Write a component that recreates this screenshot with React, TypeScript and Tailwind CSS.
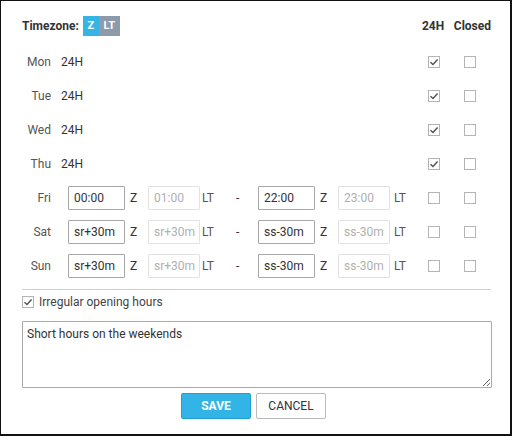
import React, { useState } from "react";

const font = { fontFamily: "Roboto, 'Liberation Sans', sans-serif" };

function Box({ checked }: { checked: boolean }) {
  return (
    <span className="flex h-[12px] w-[12px] items-center justify-center border border-[#b4b4b4] bg-white">
      {checked && (
        <svg width="10" height="10" viewBox="0 0 10 10">
          <path d="M1.5 5.2 L4 7.5 L8.6 2.4" fill="none" stroke="#555" strokeWidth="1.5" />
        </svg>
      )}
    </span>
  );
}

function TimeInput({ value, disabled, w }: { value: string; disabled?: boolean; w: string }) {
  return (
    <div
      className={
        "flex h-[24px] items-center rounded-[1px] border pl-[5px] " +
        w +
        (disabled ? " border-[#e2e2e2] text-[#b0b0b0]" : " border-[#a8a8a8] text-[#333]")
      }
    >
      {value}
    </div>
  );
}

const days = [
  { d: "Mon", full: true },
  { d: "Tue", full: true },
  { d: "Wed", full: true },
  { d: "Thu", full: true },
  { d: "Fri", full: false, a: "00:00", b: "01:00", c: "22:00", e: "23:00" },
  { d: "Sat", full: false, a: "sr+30m", b: "sr+30m", c: "ss-30m", e: "ss-30m" },
  { d: "Sun", full: false, a: "sr+30m", b: "sr+30m", c: "ss-30m", e: "ss-30m" },
];

export default function App() {
  const [note, setNote] = useState("Short hours on the weekends");

  return (
    <div
      style={font}
      className="box-border h-[436px] w-[512px] border-t border-l border-r-2 border-b-2 border-[#111] bg-white text-[12px] text-[#333]"
    >
      <div className="pl-[21px] pr-[19px] pt-[15px]">
        {/* header */}
        <div className="flex h-[20px] items-center">
          <span className="font-bold text-[#333]">Timezone:</span>
          <span className="ml-[4px] flex h-[20px] w-[16px] items-center justify-center bg-[#35b5e5] text-[11px] font-bold text-white">
            Z
          </span>
          <span className="flex h-[20px] w-[21px] items-center justify-center bg-[#8d9aab] text-[11px] font-bold text-white">
            LT
          </span>
          <div className="ml-auto flex">
            <span className="w-[36px] text-center font-bold">24H</span>
            <span className="w-[40px] pl-[2px] text-right font-bold">Closed</span>
          </div>
        </div>

        <div className="mt-[9px]">
          {days.map((r) => (
            <div key={r.d} className="flex h-[34px] items-center">
              <span className="w-[29px] text-right text-[#555]">{r.d}</span>
              {r.full ? (
                <span className="ml-[10px]">24H</span>
              ) : (
                <div className="ml-[17px] flex items-center">
                  <TimeInput value={r.a!} w="w-[57px]" />
                  <span className="w-[23px] pl-[5px]">Z</span>
                  <TimeInput value={r.b!} w="w-[52px]" disabled />
                  <span className="w-[36px] pl-[2px] text-[#555]">LT</span>
                  <span className="w-[22px]">-</span>
                  <TimeInput value={r.c!} w="w-[57px]" />
                  <span className="w-[23px] pl-[5px]">Z</span>
                  <TimeInput value={r.e!} w="w-[52px]" disabled />
                  <span className="pl-[4px] text-[#555]">LT</span>
                </div>
              )}
              <div className="ml-auto mr-[3px] flex">
                <div className="flex w-[36px] justify-center">
                  <Box checked={r.full} />
                </div>
                <div className="flex w-[36px] justify-center">
                  <Box checked={false} />
                </div>
              </div>
            </div>
          ))}
        </div>

        <div className="mt-[6px] h-px bg-[#cfcfcf]" />

        <div className="flex h-[24px] items-center gap-[5px]">
          <Box checked={true} />
          <span className="text-[#444]">Irregular opening hours</span>
        </div>

        <textarea
          value={note}
          onChange={(e) => setNote(e.target.value)}
          className="mt-[7px] block h-[67px] w-[470px] rounded-[1px] border border-[#aaa] px-[4px] py-[3px] text-[12px] text-[#333] outline-none"
          style={font}
        />

        <div className="mt-[5px] flex justify-center gap-[5px] pr-[6px]">
          <button className="h-[26px] w-[70px] rounded-[2px] border border-[#1f9fd2] bg-[#33b4e6] text-[12px] font-bold text-white">
            SAVE
          </button>
          <button className="h-[26px] w-[70px] rounded-[2px] border border-[#bbb] bg-white text-[12px] text-[#333]">
            CANCEL
          </button>
        </div>
      </div>
    </div>
  );
}
